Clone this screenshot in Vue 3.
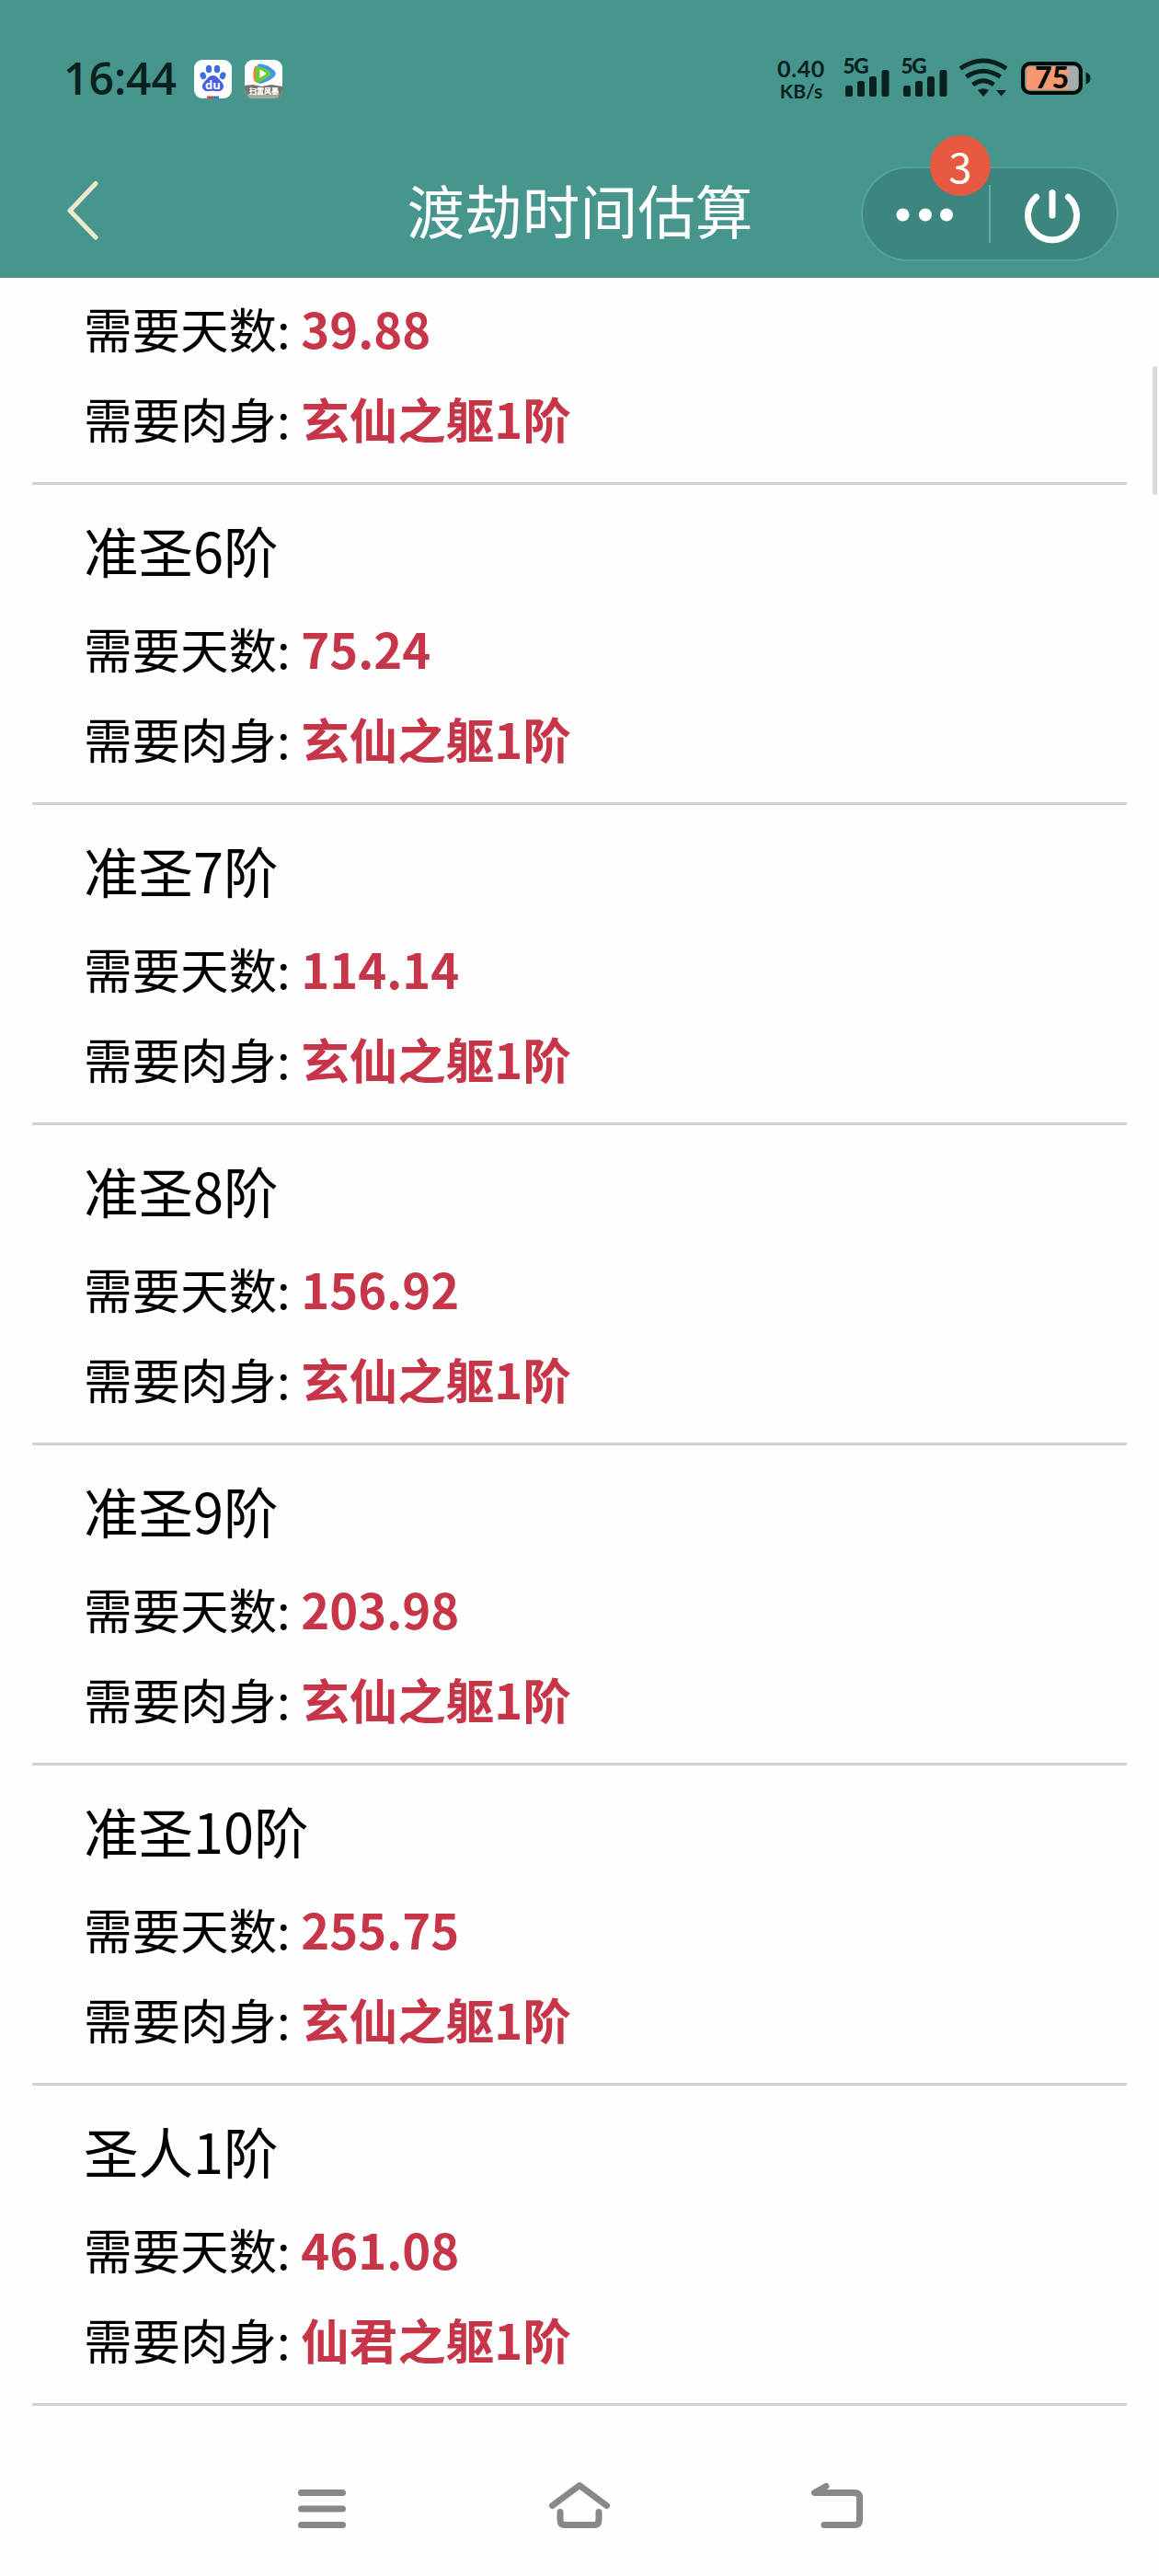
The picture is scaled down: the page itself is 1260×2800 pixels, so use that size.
<script setup>
const items = [
  { title: '', days: '39.88', body: '玄仙之躯1阶' },
  { title: '准圣6阶', days: '75.24', body: '玄仙之躯1阶' },
  { title: '准圣7阶', days: '114.14', body: '玄仙之躯1阶' },
  { title: '准圣8阶', days: '156.92', body: '玄仙之躯1阶' },
  { title: '准圣9阶', days: '203.98', body: '玄仙之躯1阶' },
  { title: '准圣10阶', days: '255.75', body: '玄仙之躯1阶' },
  { title: '圣人1阶', days: '461.08', body: '仙君之躯1阶' },
]
</script>

<template>
  <div class="screen">
    <header class="header">
      <div class="status">
        <span class="time">16:44</span>
        <svg class="app" width="41" height="42" viewBox="0 0 41 42">
          <rect width="41" height="42" rx="9" fill="#fff" />
          <g fill="#3b70dc">
            <ellipse cx="16" cy="10" rx="3.2" ry="4.3" />
            <ellipse cx="25" cy="10" rx="3.2" ry="4.3" />
            <ellipse cx="9.8" cy="17.2" rx="3.2" ry="4" transform="rotate(-18 9.8 17.2)" />
            <ellipse cx="31.2" cy="17.2" rx="3.2" ry="4" transform="rotate(18 31.2 17.2)" />
          </g>
          <path d="M20.500 17C24.500 17 26 20 29 23C32 26 33 29 31 32C28.500 35.500 24.500 33.800 20.500 33.800S12.500 35.500 10 32C8 29 9 26 12 23C15 20 16.500 17 20.500 17Z" fill="#4a5fe0" />
          <text x="20.500" y="31.500" text-anchor="middle" class="du">du</text>
          <path d="M14 39.500h7V42h-7z" fill="#d2453f" /><path d="M21 39.500h6V42h-6z" fill="#3b70dc" />
        </svg>
        <svg class="app second" width="41" height="42" viewBox="0 0 41 42">
          <defs><clipPath id="tile"><rect width="41" height="42" rx="9" /></clipPath></defs>
          <g clip-path="url(#tile)">
            <rect width="41" height="42" fill="#fff" />
            <path d="M0 28L9 27L18 29L29 27L41 29V42H0Z" fill="#77746c" />
            <path d="M3 37L14 35L24 38L38 36L36 42H4Z" fill="#aaa79d" />
            <path d="M10.500 8.500Q11 6 14 6.500V25Q10 24 9.500 20Q9 13 10.500 8.500Z" fill="#ee7d32" />
            <path d="M15 4.500Q24 4 32 11.500Q35.500 15 32 18.500Q26 24 17 26Q14 26 14 23V7Q14 5 15 4.500Z" fill="#3f97e6" />
            <path d="M13 7Q19 7 27 12.500Q30 15 27 17.500Q20 23.500 14 25Q12 25 12 22V9Q12 7.500 13 7Z" fill="#6bcb3a" />
            <path d="M16.500 10.500L24 15L16.500 19.500Z" fill="#fff" />
          </g>
          <text x="21" y="37" text-anchor="middle" class="game">扫雷风暴</text>
        </svg>
        <div class="speed"><span class="rate">0.40</span><span class="unit">KB/s</span></div>
        <svg v-for="n in 2" :key="n" class="signal" width="50" height="44" viewBox="0 0 50 44">
          <text x="-0.500" y="17" textLength="28" class="net">5G</text>
          <g fill="#08211f">
            <rect x="2" y="30" width="8" height="12" rx="2.500" />
            <rect x="15" y="25" width="8" height="17" rx="2.500" />
            <rect x="28" y="20" width="8" height="22" rx="2.500" />
            <rect x="41.500" y="13" width="8" height="29" rx="2.500" />
          </g>
        </svg>
        <svg class="wifi" width="54" height="44" viewBox="0 0 54 44">
          <g fill="none" stroke="#08211f" stroke-width="5">
            <path d="M2 11.500Q27 -5.500 52 11.500" />
            <path d="M8.500 20.500Q27 8 45.500 20.500" />
            <path d="M15.500 29Q27 20.500 38.500 29" />
          </g>
          <path d="M21 35Q27 31.500 33 35L27.800 41.300Q27 42 26.200 41.300ZM41 35H52L46.500 41.500Z" fill="#08211f" />
        </svg>
        <svg class="battery" width="76" height="36" viewBox="0 0 76 36">
          <rect x="4" y="4" width="59" height="28" rx="4" fill="#a9acad" />
          <path d="M8 4H51V32H8Q4 32 4 28V8Q4 4 8 4Z" fill="#f79870" />
          <rect x="4.500" y="4.300" width="58.500" height="27.400" rx="5" fill="none" stroke="#5d9388" stroke-width="2" />
          <rect x="2" y="2" width="63" height="32" rx="8" fill="none" stroke="#030b0a" stroke-width="4" />
          <path d="M70.500 11.500Q75.500 13 75.500 18T70.500 24.500Z" fill="#08211f" />
          <text x="33.500" y="29" text-anchor="middle" textLength="37" class="charge">75</text>
        </svg>
      </div>
      <div class="bar">
        <svg class="back" width="36" height="68" viewBox="0 0 36 68">
          <path d="M32 4.500L4 34L32 63" fill="none" stroke="#eee7c8" stroke-width="5" stroke-linecap="round" stroke-linejoin="round" />
        </svg>
        <h1 class="title">渡劫时间估算</h1>
        <div class="capsule">
          <svg class="dots" width="137" height="99" viewBox="0 0 137 99">
            <g fill="#fff"><circle cx="43.500" cy="50.500" r="7" /><circle cx="68" cy="50.500" r="7" /><circle cx="91" cy="50.500" r="7" /></g>
          </svg>
          <i class="divider"></i>
          <svg class="power" width="137" height="99" viewBox="0 0 137 99">
            <path d="M49.700 31.200A26.500 26.500 0 1 0 84.300 31.200M67 26.500V51" fill="none" stroke="#fff" stroke-width="7" stroke-linecap="round" />
          </svg>
          <span class="badge">3</span>
        </div>
      </div>
    </header>

    <main class="list">
      <section v-for="(item, i) in items" :key="i" class="item" :class="{ partial: !item.title }">
        <h2 v-if="item.title">{{ item.title }}</h2>
        <p>需要天数: <b>{{ item.days }}</b></p>
        <p>需要肉身: <b>{{ item.body }}</b></p>
      </section>
      <i class="scrollbar"></i>
    </main>

    <nav class="nav">
      <svg width="52" height="54" viewBox="0 0 52 54">
        <path d="M3.500 13.500H48.500M3.500 31H48.500M3.500 48.500H48.500" />
      </svg>
      <svg width="66" height="54" viewBox="0 0 66 54">
        <path d="M4.500 27.500L34 5.500L63.500 27.500M13 34.500V43Q13 48.500 18 48.500H50Q55 48.500 55 43V34.500" />
      </svg>
      <svg width="56" height="54" viewBox="0 0 56 54">
        <path d="M16 6.500L3.500 13.500H47Q52.500 13.500 52.500 18.500V43.500Q52.500 48.500 47 48.500H14" />
      </svg>
    </nav>
  </div>
</template>

<style>
body { margin: 0; background: #fff; }
</style>

<style scoped>
.screen {
  width: 1260px;
  height: 2800px;
  display: flex;
  flex-direction: column;
  overflow: hidden;
  background: #fefefe;
  color: #000;
  font-family: "Noto Sans CJK SC", sans-serif;
}
svg { display: block; flex: none; overflow: visible; }
.header { height: 302px; flex: none; background: #46968e; }
.status {
  height: 170px;
  box-sizing: border-box;
  padding: 63px 0 0 69px;
  display: flex;
  align-items: flex-start;
  color: #08211f;
}
.time {
  width: 142px;
  font: 600 48px/44px "Open Sans", sans-serif;
}
.app { margin-top: 2px; }
.second { margin-left: 14px; }
.du { font: 700 13px "Open Sans", sans-serif; fill: #fff; }
.game { font: 900 8px "Noto Sans CJK SC", sans-serif; fill: #fff; }
.speed {
  width: 56px;
  margin: 0 18px 0 536px;
  display: flex;
  flex-direction: column;
  align-items: center;
  font-family: Lato, sans-serif;
  font-weight: 700;
}
.rate { font-size: 25px; line-height: 23px; letter-spacing: 0.6px; }
.unit { font-size: 21px; line-height: 25px; }
.signal { margin-right: 13px; }
.net { font: 900 22.500px Lato, sans-serif; fill: #08211f; }
.wifi { margin-left: -1px; }
.battery { margin: 4px 0 0 14px; }
.charge { font: 900 32px Lato, sans-serif; fill: #050b0a; }
.bar {
  height: 132px;
  box-sizing: border-box;
  padding: 11px 44px 0 72px;
  display: grid;
  grid-template-columns: 280px 1fr 280px;
  align-items: start;
}
.back { margin-top: 14px; }
.title {
  margin: -1px 0 0 -27px;
  text-align: center;
  font-size: 62.700px;
  line-height: 93px;
  font-weight: 400;
  color: #fff;
  white-space: nowrap;
}
.capsule {
  position: relative;
  height: 103px;
  box-sizing: border-box;
  display: flex;
  align-items: center;
  border: 2px solid #56a198;
  border-radius: 52px;
  background: #3d867f;
}
.divider { width: 2px; height: 63px; flex: none; background: #68aaa3; }
.badge {
  position: absolute;
  left: 73px;
  top: -36px;
  width: 66px;
  height: 66px;
  border-radius: 50%;
  background: #e75a42;
  color: #fff;
  font-size: 45px;
  line-height: 66px;
  text-align: center;
}
.list { position: relative; flex: none; padding: 0 35px; }
.item {
  height: 348px;
  box-sizing: border-box;
  padding: 13px 56px 21px;
  border-bottom: 3px solid #d1d1d1;
}
.partial { height: 225px; padding-top: 5px; }
h2 { margin: 0; font-size: 59.5px; line-height: 115px; font-weight: 400; }
p { margin: 0; font-size: 52.5px; line-height: 98px; white-space: nowrap; }
b { font-weight: 700; color: #c73548; }
.scrollbar {
  position: absolute;
  right: 2px;
  top: 96px;
  width: 5px;
  height: 140px;
  border-radius: 2px;
  background: #d9d9d9;
}
.nav {
  height: 185px;
  box-sizing: border-box;
  padding: 81px 322px 0 324px;
  display: flex;
  justify-content: space-between;
}
.nav path {
  fill: none;
  stroke: #888;
  stroke-width: 7;
  stroke-linecap: round;
  stroke-linejoin: round;
}
</style>
